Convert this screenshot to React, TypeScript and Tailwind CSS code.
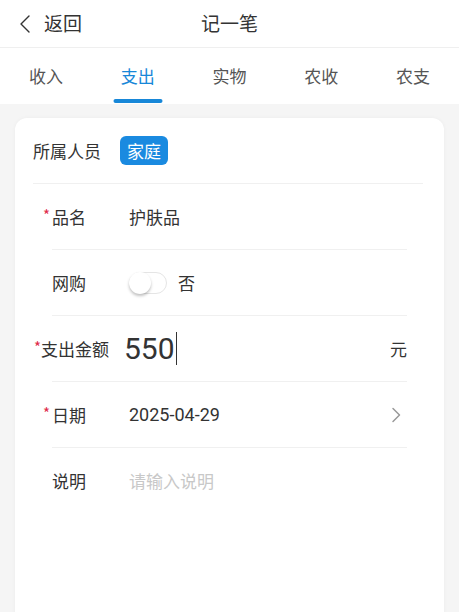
import React from 'react';

const font = { fontFamily: '"Noto Sans CJK SC", Roboto, sans-serif' };

function Star({ className }: { className: string }) {
    return <span className={`absolute text-[#e02a4a] text-[15px] leading-none ${className}`}>*</span>;
}

export default function App() {
    const tabs = ['收入', '支出', '实物', '农收', '农支'];

    return (
        <div className="h-[612px] w-[459px] overflow-hidden bg-[#f5f5f5] text-[#333]" style={font}>
            {/* Header */}
            <header className="relative h-[48px] bg-white border-b border-[#efefef] flex items-center justify-center">
                <div className="absolute left-[18px] top-0 h-full flex items-center gap-[12px]">
                    <svg width="14" height="20" viewBox="0 0 14 20" fill="none">
                        <path d="M11 2 L3 10 L11 18" stroke="#333" strokeWidth="1.4" strokeLinecap="round" strokeLinejoin="round" />
                    </svg>
                    <span className="text-[19px]">返回</span>
                </div>
                <h1 className="text-[19px]">记一笔</h1>
            </header>

            {/* Tabs */}
            <nav className="h-[56px] bg-white flex">
                {tabs.map((t, i) => (
                    <div key={t} className="flex-1 relative flex items-center justify-center">
                        <span className={`text-[17px] ${i === 1 ? 'text-[#1787d8]' : 'text-[#555]'}`}>{t}</span>
                        {i === 1 && (
                            <span className="absolute bottom-[1px] left-1/2 -translate-x-1/2 w-[49px] h-[4px] rounded-full bg-[#1787d8]" />
                        )}
                    </div>
                ))}
            </nav>

            {/* Card */}
            <div className="mx-[15px] mt-[14px] h-[520px] bg-white rounded-[12px] shadow-[0_0_4px_rgba(0,0,0,0.04)] pl-[18px] pr-[21px]">
                <div className="h-[66px] flex items-center border-b border-[#f0f0f0]">
                    <span className="text-[17px] w-[87px]">所属人员</span>
                    <span className="bg-[#1a8ae0] text-white text-[17px] rounded-[6px] px-[7px] h-[29px] flex items-center">家庭</span>
                </div>

                <div className="pl-[19px] pr-[16px]">
                    {/* 品名 */}
                    <div className="h-[66px] flex items-center border-b border-[#f0f0f0]">
                        <span className="relative text-[17px] w-[77px]">
                            <Star className="-left-[9px] top-[3px]" />品名
                        </span>
                        <span className="text-[17px]">护肤品</span>
                    </div>

                    {/* 网购 */}
                    <div className="h-[66px] flex items-center border-b border-[#f0f0f0]">
                        <span className="text-[17px] w-[77px]">网购</span>
                        <span className="relative w-[38px] h-[22px] rounded-full border border-[#e5e5e5] bg-white">
                            <span className="absolute left-[-1px] top-[-1px] w-[22px] h-[22px] rounded-full bg-white shadow-[0_2px_3px_rgba(0,0,0,0.25)]" />
                        </span>
                        <span className="text-[17px] ml-[11px]">否</span>
                    </div>

                    {/* 支出金额 */}
                    <div className="h-[66px] flex items-center border-b border-[#f0f0f0]">
                        <span className="relative text-[17px] w-[83px] -ml-[11px] whitespace-nowrap">
                            <Star className="-left-[7px] top-[3px]" />支出金额
                        </span>
                        <span className="text-[30px] leading-none text-[#333] flex items-center" style={{ fontFamily: 'Roboto, sans-serif' }}>
                            550<span className="w-[1.5px] h-[33px] bg-[#333] ml-[1px]" />
                        </span>
                        <span className="ml-auto text-[17px]">元</span>
                    </div>

                    {/* 日期 */}
                    <div className="h-[66px] flex items-center border-b border-[#f0f0f0]">
                        <span className="relative text-[17px] w-[77px]">
                            <Star className="-left-[9px] top-[3px]" />日期
                        </span>
                        <span className="text-[18px]" style={{ fontFamily: 'Roboto, sans-serif' }}>2025-04-29</span>
                        <svg className="ml-auto mr-[6px]" width="10" height="16" viewBox="0 0 10 16" fill="none">
                            <path d="M2 1.5 L8.5 8 L2 14.5" stroke="#999" strokeWidth="1.5" strokeLinecap="round" strokeLinejoin="round" />
                        </svg>
                    </div>

                    {/* 说明 */}
                    <div className="h-[66px] flex items-center">
                        <span className="text-[17px] w-[77px]">说明</span>
                        <span className="text-[17px] text-[#c8c8c8]">请输入说明</span>
                    </div>
                </div>
            </div>
        </div>
    );
}
